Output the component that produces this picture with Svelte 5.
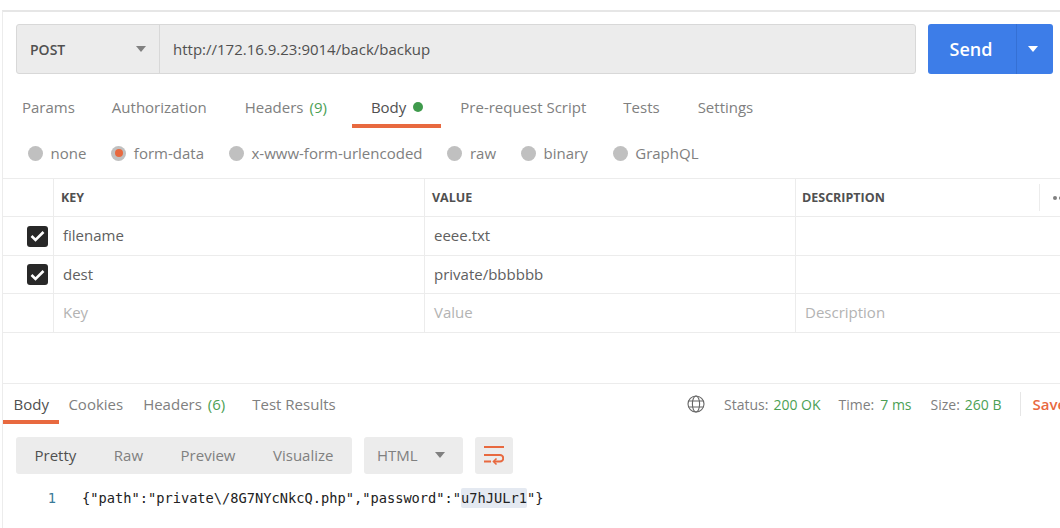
<script>
  const tabs = [
    { label: 'Params' },
    { label: 'Authorization' },
    { label: 'Headers', count: '(9)' },
    { label: 'Body', dot: true, active: true },
    { label: 'Pre-request Script' },
    { label: 'Tests' },
    { label: 'Settings' }
  ];
  const radios = ['none', 'form-data', 'x-www-form-urlencoded', 'raw', 'binary', 'GraphQL'];
  const rows = [
    { key: 'filename', value: 'eeee.txt' },
    { key: 'dest', value: 'private/bbbbbb' }
  ];
</script>

<div class="page">
  <div class="panel">
    <div class="url-row">
      <div class="url-box">
        <div class="method"><span>POST</span><i class="caret"></i></div>
        <div class="url">http://172.16.9.23:9014/back/backup</div>
      </div>
      <div class="send">
        <span class="send-label">Send</span>
        <span class="send-more"><i class="caret white"></i></span>
      </div>
    </div>

    <div class="tabs">
      {#each tabs as t}
        <div class="tab" class:active={t.active}>
          {t.label}{#if t.count}<span class="count">{t.count}</span>{/if}{#if t.dot}<i class="dot"></i>{/if}
        </div>
      {/each}
    </div>

    <div class="radios">
      {#each radios as r, i}
        <div class="radio-item">
          <span class="radio">{#if i === 1}<i></i>{/if}</span>{r}
        </div>
      {/each}
    </div>

    <div class="table">
      <div class="tr head">
        <div class="td chk"></div>
        <div class="td key">KEY</div>
        <div class="td val">VALUE</div>
        <div class="td desc">DESCRIPTION</div>
        <div class="more"><i></i><i></i><i></i></div>
      </div>
      {#each rows as row}
        <div class="tr">
          <div class="td chk">
            <span class="box">
              <svg width="15" height="12" viewBox="0 0 15 12"><path d="M1.500 6 L5.500 10 L13.500 2" fill="none" stroke="#fff" stroke-width="2.600"/></svg>
            </span>
          </div>
          <div class="td key cell">{row.key}</div>
          <div class="td val cell">{row.value}</div>
          <div class="td desc cell"></div>
        </div>
      {/each}
      <div class="tr">
        <div class="td chk"></div>
        <div class="td key cell ph">Key</div>
        <div class="td val cell ph">Value</div>
        <div class="td desc cell ph">Description</div>
      </div>
    </div>

    <div class="response">
      <div class="res-head">
        <div class="res-tabs">
          <div class="rtab active">Body</div>
          <div class="rtab">Cookies</div>
          <div class="rtab">Headers<span class="count">(6)</span></div>
          <div class="rtab">Test Results</div>
        </div>
        <div class="meta">
          <svg class="globe" width="18" height="18" viewBox="0 0 18 18" fill="none" stroke="#666" stroke-width="1.100">
            <circle cx="9" cy="9" r="8"/>
            <ellipse cx="9" cy="9" rx="3.600" ry="8"/>
            <path d="M1.600 6 H16.400 M1.600 12 H16.400"/>
          </svg>
          <span class="m-item">Status:<b>200 OK</b></span>
          <span class="m-item time">Time:<b>7 ms</b></span>
          <span class="m-item">Size:<b>260 B</b></span>
          <span class="save">Save</span>
        </div>
      </div>

      <div class="toolbar">
        <div class="seg">
          <span class="on">Pretty</span><span>Raw</span><span>Preview</span><span>Visualize</span>
        </div>
        <div class="lang"><span>HTML</span><i class="caret"></i></div>
        <div class="wrap">
          <svg width="20" height="20" viewBox="0 0 20 20" fill="none" stroke="#e8693f" stroke-width="2">
            <path d="M0 1 H20"/>
            <path d="M0 9 H16 A3.250 3.250 0 0 1 16 15.500 H10"/>
            <path d="M12.500 12.500 L9.500 15.500 L12.500 18.500" stroke-width="1.600"/>
            <path d="M0 15.500 H7"/>
          </svg>
        </div>
      </div>

      <div class="code">
        <span class="ln">1</span>
        <span class="src">{'{"path":"private\\/8G7NYcNkcQ.php","password":"'}<mark>u7hJULr1</mark>{'"}'}</span>
      </div>
    </div>
  </div>
</div>

<style>
  :global(body) { margin: 0; background: #fff; }
  .page {
    width: 1060px; height: 528px; overflow: hidden; box-sizing: border-box;
    padding: 10px 0 0 2px; background: #fff;
    font-family: "Open Sans", sans-serif; font-size: 15px; color: #808080;
  }
  .panel {
    width: 1100px; height: 518px; box-sizing: border-box;
    border-top: 2px solid #e6e6e6; border-left: 1px solid #ececec;
  }
  i { display: block; }
  .caret {
    width: 0; height: 0; border-left: 5px solid transparent; border-right: 5px solid transparent;
    border-top: 6px solid #808080;
  }
  .caret.white { border-top-color: #fff; }

  .url-row { display: flex; padding: 12px 0 0 13px; }
  .url-box {
    width: 900px; height: 50px; box-sizing: border-box; display: flex;
    background: #ececec; border: 1px solid #d8d8d8; border-radius: 3px;
  }
  .method {
    width: 143px; box-sizing: border-box; padding: 0 13px; display: flex; align-items: center;
    justify-content: space-between; border-right: 1px solid #d8d8d8;
    font-size: 14px; font-weight: 600; color: #505050;
  }
  .url { padding-left: 13px; line-height: 48px; color: #505050; }
  .send {
    margin-left: 12px; width: 125px; height: 50px; display: flex; background: #3d7de8; border-radius: 3px;
    color: #fff; font-weight: 600; font-size: 18px;
  }
  .send-label { width: 86px; padding-right: 2px; text-align: center; line-height: 50px; border-right: 1px solid #3570d4; }
  .send-more { flex: 1; display: flex; align-items: center; justify-content: center; padding-right: 4px; }

  .tabs { display: flex; margin-top: 12px; height: 42px; }
  .tab { padding: 0 19px; height: 42px; line-height: 42px; display: flex; box-sizing: border-box; white-space: pre; }
  .tab:nth-child(1) { padding-right: 18px; }
  .tab:nth-child(3) { padding-right: 25px; }
  .tab:nth-child(5) { padding-right: 18px; }
  .tab.active { color: #505050; border-bottom: 4px solid #e8693f; padding-right: 18px; }
  .count { color: #4c9f55; margin-left: 6px; }
  .dot { width: 10px; height: 10px; border-radius: 50%; background: #3f9a4c; margin: 16px 0 0 7px; }

  .radios { display: flex; padding: 0 0 0 25px; height: 50px; align-items: center; gap: 25px; }
  .radio-item { display: flex; align-items: center; white-space: nowrap; }
  .radio {
    width: 15px; height: 15px; border-radius: 50%; background: #c0c0c0; margin-right: 7.500px;
    display: flex; align-items: center; justify-content: center;
  }
  .radio i { width: 8px; height: 8px; border-radius: 50%; background: #e8693f; }

  .table { border-top: 1px solid #ececec; }
  .tr { display: flex; height: 38px; border-bottom: 1px solid #ececec; color: #606060; }
  .tr:nth-child(3) { height: 37px; }
  .td { box-sizing: border-box; border-right: 1px solid #ececec; display: flex; align-items: center; padding: 0 0 2px 7px; }
  .chk { width: 51px; padding: 0 5px 0 0; justify-content: flex-end; }
  .key { width: 371px; }
  .val { width: 371px; }
  .desc { width: 243px; border-right: 0; }
  .head { height: 37px; }
  .head .td { font-size: 12.500px; font-weight: 700; color: #505050; padding: 0 0 0 7px; }
  .head .desc { padding-left: 6px; }
  .head .chk { padding: 0; }
  .more { display: flex; align-items: center; gap: 2px; padding-left: 13px; height: 27px; margin-top: 5px; border-left: 1px solid #ececec; }
  .more i { width: 4px; height: 4px; border-radius: 50%; background: #808080; }
  .cell { padding-left: 9px; }
  .ph { color: #b3b3b3; }
  .box {
    width: 21px; height: 21px; border-radius: 3px; background: #282828;
    display: flex; align-items: center; justify-content: center;
  }

  .response { margin-top: 50px; border-top: 1px solid #ececec; }
  .res-head { display: flex; height: 40px; align-items: flex-start; }
  .res-tabs { display: flex; width: 670px; }
  .rtab { padding: 0 10px; height: 40px; line-height: 40px; box-sizing: border-box; white-space: nowrap; }
  .rtab:nth-child(2) { margin-left: -1px; }
  .rtab:nth-child(3) { padding-right: 17px; }
  .rtab.active { color: #505050; border-bottom: 4px solid #e8693f; padding: 0 10.500px; }
  .meta { display: flex; align-items: center; height: 40px; font-size: 14px; margin-left: 14px; white-space: nowrap; }
  .globe { margin-right: 19px; }
  .m-item { margin-right: 18px; color: #808080; }
  .m-item b { font-weight: 400; color: #4c9f55; margin-left: 5px; }
  .time { margin-right: 19px; }
  .time b { margin-left: 6px; }
  .save {
    color: #e8693f; font-weight: 600; font-size: 15px; padding-left: 12px;
    border-left: 1px solid #e6e6e6; line-height: 24px;
  }

  .toolbar { display: flex; gap: 12px; padding: 13px 0 0 13px; }
  .seg, .lang, .wrap { height: 37px; border-radius: 3px; background: #ececec; display: flex; align-items: center; }
  .seg { width: 336px; box-sizing: border-box; padding: 0 18.500px 2px; justify-content: space-between; }
  .on { color: #505050; }
  .lang { width: 99px; box-sizing: border-box; padding: 0 18px 2px 13px; justify-content: space-between; }
  .wrap { width: 38px; justify-content: center; }

  .code { display: flex; margin-top: 14px; font-family: "DejaVu Sans Mono", monospace; font-size: 13.700px; line-height: 20px; }
  .ln { width: 53px; text-align: right; color: #3b7a98; flex: none; }
  .src { margin-left: 26px; color: #222; white-space: pre; }
  mark { background: #e4e9f1; color: inherit; border-radius: 2px; padding: 2px 0; }
</style>
